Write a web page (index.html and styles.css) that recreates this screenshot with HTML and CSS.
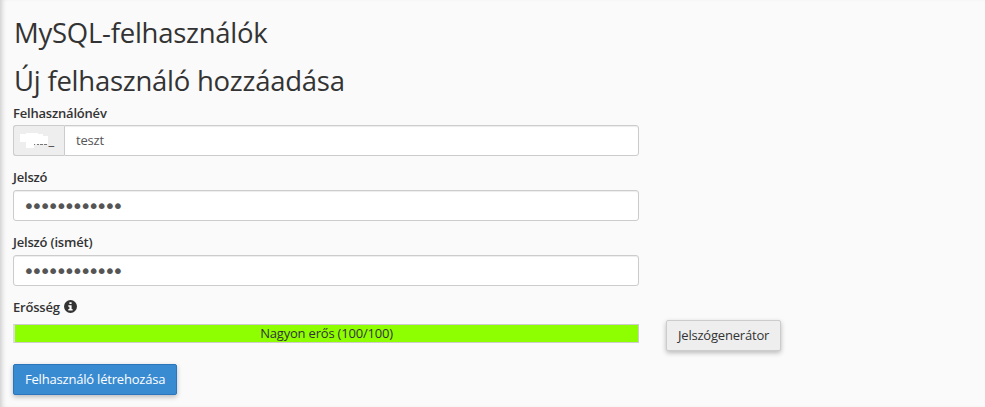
FILE: index.html
```html
<!DOCTYPE html>
<html lang="hu">
<head>
  <meta charset="UTF-8">
  <meta name="viewport" content="width=device-width, initial-scale=1.0">
  <title>MySQL-felhasználók</title>
  <link rel="stylesheet" href="styles.css">
</head>
<body>
  <main>
    <h1>MySQL-felhasználók</h1>
    <h2>Új felhasználó hozzáadása</h2>

    <form id="add-user-form">
      <div class="form-group">
        <label for="user">Felhasználónév</label>
        <div class="input-group">
          <span class="input-prefix">
            <svg class="prefix-mask" width="28" height="15" viewBox="0 0 28 15">
              <path d="M0 1h6V0h12v1h5v2h5v8H14v4H6V9H0z" fill="#fff"/>
              <path d="M14 11.5h1M17 11.5h2M20 11.5h3M24 11.5h3" stroke="#777"/>
            </svg>_</span>
          <input type="text" id="user" name="user" value="teszt">
        </div>
      </div>

      <div class="form-group">
        <label for="password">Jelszó</label>
        <input type="password" id="password" name="password" value="abcdefghijkl">
      </div>

      <div class="form-group">
        <label for="password2">Jelszó (ismét)</label>
        <input type="password" id="password2" name="password2" value="abcdefghijkl">
      </div>

      <div class="strength-label">
        <span>Erősség</span>
        <svg class="info-icon" width="13" height="13" viewBox="0 0 13 13">
          <circle cx="6.5" cy="6.5" r="6.5" fill="#333"/>
          <path d="M5.4 2.2h2.2v1.9H5.4zM4.3 5.2h3.3v3.7h1v1.6H4.3V8.9h1.1V6.8H4.3z" fill="#fff"/>
        </svg>
      </div>
      <div class="strength-row">
        <div class="strength-bar">Nagyon erős (100/100)</div>
        <button type="button" class="btn">Jelszógenerátor</button>
      </div>

      <button type="submit" class="btn btn-primary">Felhasználó létrehozása</button>
    </form>
  </main>
</body>
</html>
```
FILE: styles.css
```css
* {
  box-sizing: border-box;
}

body {
  font-family: "Open Sans", sans-serif;
  font-size: 13px;
  line-height: 18px;
  letter-spacing: -0.2px;
  margin: 0;
  min-height: 407px;
  background: #fafafa;
  color: #333;
  box-shadow: inset 5px 0 5px -3px rgba(0, 0, 0, 0.18);
  overflow: hidden;
}

main {
  padding: 17px 13px 0;
}

h1, h2 {
  margin: 0;
  padding-left: 1px;
  font-size: 27.5px;
  font-weight: 400;
  line-height: 32px;
  letter-spacing: -0.25px;
}

h1 {
  margin-bottom: 16px;
}

h2 {
  margin-bottom: 7px;
}

.form-group {
  width: 626px;
  height: 65px;
}

.form-group + .form-group {
  margin-top: -1px;
  height: 66px;
}

label {
  display: block;
  font-weight: 600;
  margin-bottom: 3px;
}

.form-group + .form-group label {
  margin-bottom: 4px;
}

input {
  display: block;
  width: 100%;
  height: 31px;
  padding: 0 11px 2px;
  border: 1px solid #ccc;
  border-radius: 3px;
  background: #fff;
  color: #555;
  font-family: inherit;
  font-size: 13px;
  letter-spacing: inherit;
  box-shadow: inset 0 1px 1px rgba(0, 0, 0, 0.075);
}

input[type="password"] {
  padding: 1px 9px 0;
  font-family: "DejaVu Sans", sans-serif;
  font-size: 20px;
  letter-spacing: -3.7px;
}

.input-group {
  display: flex;
}

.input-prefix {
  position: relative;
  flex: none;
  width: 51px;
  height: 31px;
  padding: 5px 10px;
  border: 1px solid #ccc;
  border-right: 0;
  border-radius: 3px 0 0 3px;
  background: #eee;
  text-align: right;
}

/* hides the account name */
.prefix-mask {
  position: absolute;
  left: 6px;
  top: 7px;
}

.input-group input {
  flex: 1;
  border-radius: 0 3px 3px 0;
}

.strength-label {
  display: flex;
  gap: 4px;
  margin-top: -1px;
  font-weight: 600;
}

.info-icon {
  margin-top: 2px;
}

.strength-row {
  display: flex;
  align-items: flex-start;
  gap: 27px;
  margin: 4px 0 13px;
}

.strength-bar {
  width: 626px;
  height: 19px;
  margin-top: 4px;
  border: 1px solid #ccc;
  border-left: 2px solid #ddd;
  background: #8eff00;
  line-height: 17px;
  text-align: center;
}

.btn {
  height: 31px;
  padding: 0 11px 2px;
  border: 1px solid #ccc;
  border-radius: 2px;
  background: #eee;
  color: #333;
  font-family: inherit;
  font-size: 13px;
  letter-spacing: inherit;
  box-shadow: 0 2px 5px rgba(0, 0, 0, 0.26);
}

.btn-primary {
  border-color: #2a75bb;
  background: #398bd1;
  color: #fff;
}
```
